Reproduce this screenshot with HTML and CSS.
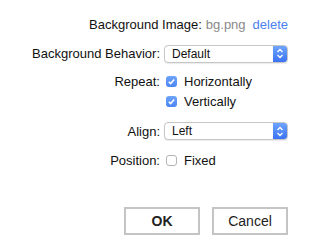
FILE: index.html
```html
<!DOCTYPE html>
<html lang="en">
	<head>
		<meta charset="UTF-8" />
		<title>Background settings</title>
		<link rel="stylesheet" href="styles.css">
	</head>
	<body>
		<div class="dialog">
			<div class="image-row">
				<span>Background Image:</span>
				<span class="file-name">bg.png</span>
				<a href="#delete" class="delete-link">delete</a>
			</div>

			<div class="row row-behavior">
				<label class="label">Background Behavior:</label>
				<div class="select">
					<select>
						<option>Default</option>
					</select>
					<span class="select-arrow">
						<svg width="8" height="11" viewBox="0 0 8 11">
							<path d="M1.5 4 L4 1.5 L6.5 4 M1.5 7 L4 9.5 L6.5 7" fill="none" stroke="#fff" stroke-width="1.3" />
						</svg>
					</span>
				</div>
			</div>

			<div class="row row-repeat">
				<span class="label">Repeat:</span>
				<label class="check"><span class="box checked"><svg width="11" height="11" viewBox="0 0 11 11"><path d="M2.8 5.8 L4.6 7.6 L8.2 3.4" fill="none" stroke="#fff" stroke-width="1.5" /></svg></span>Horizontally</label>
			</div>

			<div class="row row-vertical">
				<span class="label"></span>
				<label class="check"><span class="box checked"><svg width="11" height="11" viewBox="0 0 11 11"><path d="M2.8 5.8 L4.6 7.6 L8.2 3.4" fill="none" stroke="#fff" stroke-width="1.5" /></svg></span>Vertically</label>
			</div>

			<div class="row row-align">
				<label class="label">Align:</label>
				<div class="select">
					<select>
						<option>Left</option>
					</select>
					<span class="select-arrow">
						<svg width="8" height="11" viewBox="0 0 8 11">
							<path d="M1.5 4 L4 1.5 L6.5 4 M1.5 7 L4 9.5 L6.5 7" fill="none" stroke="#fff" stroke-width="1.3" />
						</svg>
					</span>
				</div>
			</div>

			<div class="row row-position">
				<span class="label">Position:</span>
				<label class="check"><span class="box"></span>Fixed</label>
			</div>

			<div class="buttons">
				<button class="btn btn-ok">OK</button>
				<button class="btn">Cancel</button>
			</div>
		</div>
	</body>
</html>
```

FILE: styles.css
```css
body {
	margin: 0;
	font-family: "Liberation Sans", Arial, sans-serif;
	font-size: 13px;
	color: #111;
	background: #fff;
}
.dialog {
	width: 288px;
	padding-top: 16px;
}
.image-row {
	display: flex;
	justify-content: flex-end;
	align-items: center;
	height: 16px;
}
.file-name {
	color: #8a8a8a;
	margin-left: 4px;
}
.delete-link {
	color: #4a80f0;
	text-decoration: none;
	margin-left: 7px;
}
.row {
	display: grid;
	grid-template-columns: 160px 124px;
	column-gap: 4px;
	align-items: center;
	height: 16px;
}
.label {
	text-align: right;
}
.row-behavior {
	margin-top: 12px;
	height: 19px;
}
.row-repeat {
	margin-top: 10px;
}
.row-vertical {
	margin-top: 4px;
}
.row-align {
	margin-top: 12px;
	height: 20px;
}
.row-position {
	margin-top: 11px;
}
.select {
	display: flex;
	height: 18px;
	box-sizing: border-box;
	border: 1px solid #c6c6c6;
	border-radius: 4px;
	background: #fff;
	box-shadow: 0 1px 1px rgba(0, 0, 0, 0.08);
	overflow: hidden;
}
.select select {
	flex: 1;
	appearance: none;
	-webkit-appearance: none;
	border: none;
	background: transparent;
	font-family: "Liberation Sans", Arial, sans-serif;
	font-size: 12px;
	color: #111;
	padding: 0 0 0 7px;
	margin: 0;
	outline: none;
}
.select-arrow {
	width: 14px;
	display: flex;
	align-items: center;
	justify-content: center;
	background: linear-gradient(#6ea4fc, #3b72f4);
}
.check {
	display: flex;
	align-items: center;
	font-size: 13px;
}
.box {
	width: 11px;
	height: 11px;
	box-sizing: border-box;
	border: 1px solid #b4b4b4;
	border-radius: 3px;
	background: #fff;
	margin: 0 7px 0 2px;
	display: flex;
}
.box.checked {
	border: none;
	background: linear-gradient(#6fa3fb, #4a85f4);
}
.buttons {
	display: flex;
	justify-content: flex-end;
	gap: 12px;
	margin-top: 39px;
}
.btn {
	width: 76px;
	height: 28px;
	border: 2px solid #c4c4c4;
	background: #fff;
	font-family: "Liberation Sans", Arial, sans-serif;
	font-size: 14px;
	color: #222;
	padding: 0;
}
.btn-ok {
	font-weight: bold;
}
```
